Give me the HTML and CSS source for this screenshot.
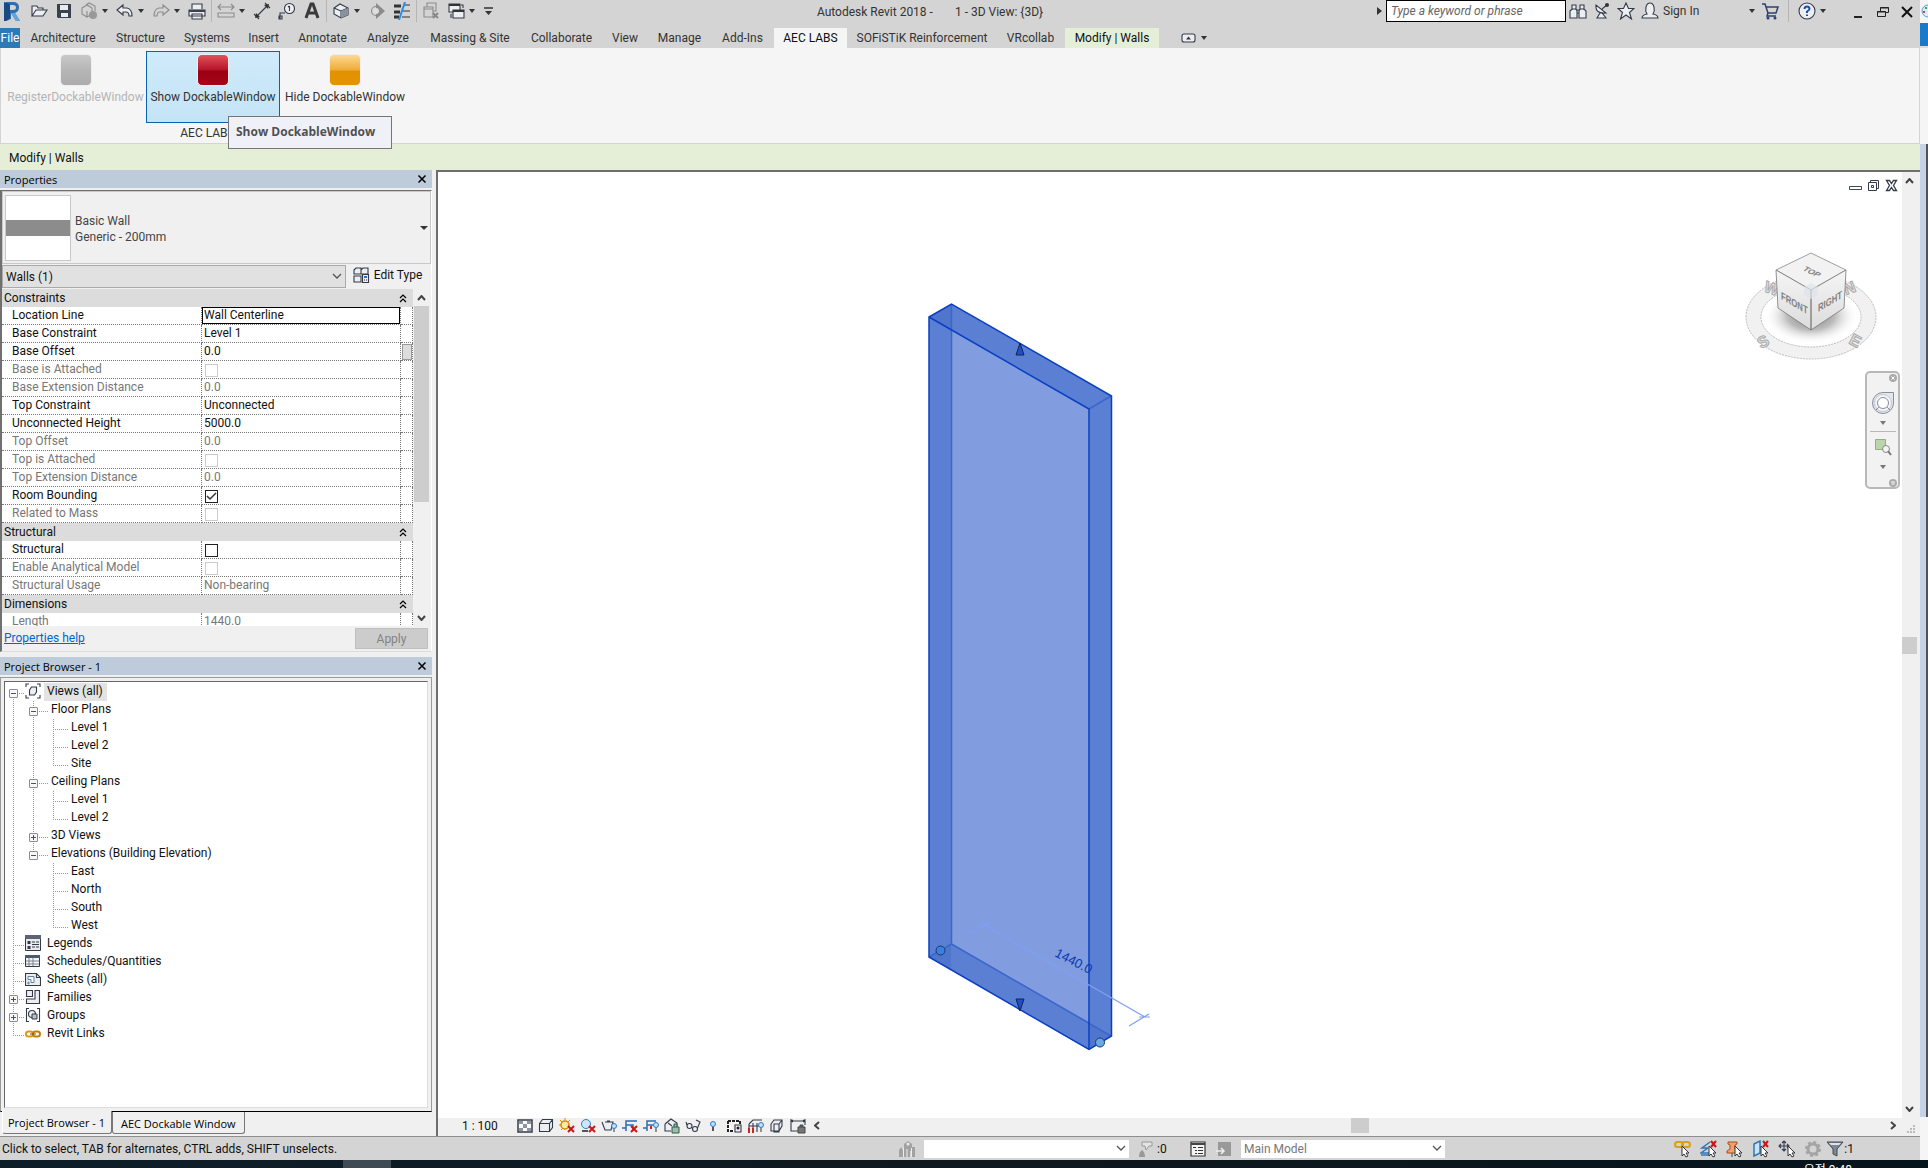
FILE: index.html
```html
<!DOCTYPE html>
<html lang="en">
<head>
<meta charset="utf-8">
<title>Autodesk Revit 2018</title>
<link rel="stylesheet" href="styles.css">
</head>
<body>
<div class="desktop">
<div class="app">

<header class="titlebar">
  <div class="quick">
    <button class="logo" aria-label="Application menu"><svg width="21" height="22" viewBox="0 0 21 22"><path d="M4 2h7q6 0 6 5.500 0 4-4 5.500l5 8h-4l-5-8v6l-5 2z" fill="#2f6fb0"/><path d="M8 5h3q3 0 3 2.500T11 10H8z" fill="#d4d4d4"/><path d="M2 2l6 2v14l-4 3H2z" fill="#1b4a80"/><path d="M9 13l4 0 5 8h-4z" fill="#5ea6dc"/></svg></button>
    <button aria-label="Open"><svg viewBox="0 0 18 18"><path d="M2 14V4h5l1 2h5v2M2 14l4-6h11l-4 6z" class="ln lt"/></svg></button>
    <button aria-label="Save"><svg viewBox="0 0 18 18"><path d="M2 2h14v14H3l-1-1z" fill="#3a404e"/><path d="M5 3h8v5H5zM6 11h7v4H6z" fill="#e8ebf0"/></svg></button>
    <button class="dd off" aria-label="Synchronize"><svg viewBox="0 0 18 18"><path d="M2 6l5-3 5 3v6l-5 3-5-3zM6 3l3-2 6 3v5M7 9v6" class="ln"/><circle cx="13" cy="13" r="4" fill="#999"/></svg><i class="caret"></i></button>
    <button class="dd" aria-label="Undo"><svg viewBox="0 0 18 18"><path d="M1 8l6-5v3h4q5 1 5 8h-3q0-4-3-4H7v3z" class="ln lt"/></svg><i class="caret"></i></button>
    <button class="dd off" aria-label="Redo"><svg viewBox="0 0 18 18"><path d="M17 8l-6-5v3H7q-5 1-5 8h3q0-4 3-4h3v3z" class="ln"/></svg><i class="caret"></i></button>
    <button aria-label="Print"><svg viewBox="0 0 18 18"><path d="M4 7V2h10v5M1 8h16v6H1zM4 12h10v5H4z" class="ln lt"/><path d="M1 8h16v2H1z" fill="#3a404e"/></svg></button>
    <i class="sep"></i>
    <button class="dd off" aria-label="Measure"><svg viewBox="0 0 18 18"><path d="M1 5h16M4 2L1 5l3 3M14 2l3 3-3 3M1 11v4h16v-4z" class="ln"/></svg><i class="caret"></i></button>
    <button aria-label="Aligned dimension"><svg viewBox="0 0 18 18"><path d="M3 15L15 3M1 12l5 5M12 1l5 5" class="ln"/><path d="M2 16l1-5 4 4zM16 2l-5 1 4 4z" fill="#333"/></svg></button>
    <button aria-label="Tag by category"><svg viewBox="0 0 18 18"><circle cx="11.500" cy="6.500" r="5" class="ln lt"/><path d="M11.500 4v5M10 5l1.500-1M2 17v-6h5M1 14h3v3H1z" class="ln"/></svg></button>
    <button aria-label="Text"><svg viewBox="0 0 18 18"><path d="M3 16L8 2h2l5 14M5 11h8" fill="none" stroke="#3a3a3a" stroke-width="3"/></svg></button>
    <i class="sep"></i>
    <button class="dd" aria-label="Default 3D view"><svg viewBox="0 0 18 18"><path d="M2 6l6-4 8 4v7l-7 3-7-4z" class="ln lt"/><path d="M2 6l7 3v7M9 9l7-3" class="ln"/><path d="M9 9l7-3v7l-7 3z" fill="#8a909c"/></svg><i class="caret"></i></button>
    <button class="off" aria-label="Section"><svg viewBox="0 0 18 18"><circle cx="8" cy="9" r="4.500" class="ln"/><path d="M8 1l9 8-9 8z" fill="#8b8b8b"/><circle cx="8" cy="9" r="3" fill="#ddd"/></svg></button>
    <button aria-label="Thin lines"><svg viewBox="0 0 18 18"><path d="M1 4h7M1 10h6M1 15h5" stroke="#333" stroke-width="3"/><path d="M11 3h6M10 9h7M9 15h8" stroke="#333"/><path d="M12 0L6 18" stroke="#2c8de0" stroke-width="2"/></svg></button>
    <i class="sep"></i>
    <button class="off" aria-label="Close hidden windows"><svg viewBox="0 0 18 18"><path d="M5 5V1h9v8h-3M2 5h9v10H2zM2 7h9" class="ln"/><path d="M11 11l5 5M16 11l-5 5" stroke="#888" stroke-width="2"/></svg></button>
    <button class="dd" aria-label="Switch windows"><svg viewBox="0 0 18 18"><path d="M2 2h11v8H2z" class="ln lt"/><path d="M6 8h11v8H6z" class="ln lt"/><path d="M6 9h11M2 3h11" stroke="#333" stroke-width="2"/><path d="M14 3h2v3M4 12v4" class="ln"/></svg><i class="caret"></i></button>
    <button class="more" aria-label="Customize toolbar"><svg viewBox="0 0 12 18"><path d="M1 6h9" stroke="#333" stroke-width="1.500"/><path d="M2 9h7l-3.500 4z" fill="#333"/></svg></button>
  </div>
  <h1 class="title"><span>Autodesk Revit 2018 -</span><span>1 - 3D View: {3D}</span></h1>
  <div class="account">
    <i class="caret side"></i>
    <input class="search" type="text" placeholder="Type a keyword or phrase" aria-label="Search help">
    <button aria-label="Search"><svg viewBox="0 0 18 18"><path d="M3 8V3h4v5M11 8V3h4v5M1 9l2-2h4l1 2v7H1zM10 9l1-2h4l2 2v7h-7zM8 8h2v3H8z" class="ln lt"/></svg></button>
    <button aria-label="Communication center"><svg viewBox="0 0 18 18"><path d="M3 3q-1 9 10 8zM9 7l5-4M7 11l-3 5h9l-4-5" class="ln lt"/><circle cx="14" cy="3" r="2" fill="#333"/></svg></button>
    <button aria-label="Favorites"><svg viewBox="0 0 18 18"><path d="M9 1l2.500 5.500H17l-4.500 4 2 6.500L9 13l-5.500 4 2-6.500-4.500-4h5.500z" class="ln lt"/></svg></button>
    <button class="signin"><svg viewBox="0 0 18 18"><path d="M1 16q0-3 5-4Q4 9 5 5q1-4 4-4t4 4q1 4-1 7 5 1 5 4z" class="ln lt"/></svg><span>Sign In</span><i class="caret"></i></button>
    <button aria-label="App store"><svg viewBox="0 0 18 18"><path d="M1 2h3l3 9h8l2-6H5M7 11l-1 3h9" fill="none" stroke="#2f3f70" stroke-width="1.500"/><circle cx="7" cy="16" r="1.500" fill="#2f3f70"/><circle cx="14" cy="16" r="1.500" fill="#2f3f70"/></svg></button>
    <i class="sep"></i>
    <button class="dd" aria-label="Help"><svg viewBox="0 0 18 18"><circle cx="9" cy="9" r="8" class="ln lt"/><path d="M6.500 7q0-2.500 2.500-2.500T11.500 7Q11.500 8 9 9.500V11M9 12.500V14" fill="none" stroke="#1c50b0" stroke-width="2"/></svg><i class="caret"></i></button>
  </div>
  <div class="winbtns">
    <button aria-label="Minimize"><svg viewBox="0 0 14 14"><path d="M2 12h8" stroke="#222" stroke-width="2"/></svg></button>
    <button aria-label="Restore"><svg viewBox="0 0 14 14"><path d="M1.500 6.500h8v5h-8zM4.500 6V2.500h8v5H10M1 7h9M4 3h9" fill="none" stroke="#222"/></svg></button>
    <button aria-label="Close"><svg viewBox="0 0 14 14"><path d="M2 2l10 10M12 2L2 12" stroke="#111" stroke-width="2"/></svg></button>
  </div>
</header>

<nav class="tabs">
  <button class="file">File</button><button>Architecture</button><button>Structure</button><button>Systems</button><button>Insert</button><button>Annotate</button><button>Analyze</button><button>Massing &amp; Site</button><button>Collaborate</button><button>View</button><button>Manage</button><button>Add-Ins</button><button class="current">AEC LABS</button><button>SOFiSTiK Reinforcement</button><button>VRcollab</button><button class="context">Modify | Walls</button><button class="fold" aria-label="Minimize ribbon"><svg width="15" height="10" viewBox="0 0 15 10"><rect x="1" y="1" width="13" height="8" rx="2" class="ln lt"/><path d="M5 6.500h5L7.500 3.500z" fill="#333"/></svg><i class="caret"></i></button>
</nav>

<section class="ribbon">
  <div class="group">
    <div class="cmds">
      <button class="cmd" disabled><span class="gem grey"></span>RegisterDockableWindow</button>
      <button class="cmd hot"><span class="gem red"></span>Show DockableWindow</button>
      <button class="cmd"><span class="gem gold"></span>Hide DockableWindow</button>
    </div>
    <div class="caption">AEC LABS</div>
    <div class="tooltip" role="tooltip">Show DockableWindow</div>
  </div>
</section>
<div class="options">Modify | Walls</div>

<main class="work">
<aside class="dock">
  <section class="panel props">
    <header class="phead"><h2>Properties</h2><button aria-label="Close properties"><svg viewBox="0 0 10 10"><path d="M1.500 1.500l7 7M8.500 1.500l-7 7"/></svg></button></header>
    <div class="pframe">
      <button class="type"><span class="thumb"></span><span class="tname">Basic Wall<br>Generic - 200mm</span><i class="caret big"></i></button>
      <div class="filter">
        <select aria-label="Element filter"><option>Walls (1)</option></select>
        <button class="edit"><svg width="17" height="17" viewBox="0 0 17 17"><path d="M1 3l2-2h5v6H1zM8 3l2-2h5v6M1 9h7v6H1zM8 3v4h7" class="ln lt"/><path d="M9.500 7.500h6v8h-6z" class="ln lt"/><path d="M11 9h3v2h-3z" fill="#2d6fc4"/><path d="M11 13h3" stroke="#333" stroke-dasharray="1 1"/></svg>Edit Type</button>
      </div>
      <div class="gridwrap">
        <table class="grid">
          <colgroup><col class="c1"><col><col class="c3"></colgroup>
          <tbody>
          <tr class="gh"><th colspan="3"><div>Constraints<svg viewBox="0 0 8 9"><path d="M1 4l3-3 3 3M1 8l3-3 3 3"/></svg></div></th></tr>
          <tr><th><label for="p1">Location Line</label></th><td><input class="focus" id="p1" value="Wall Centerline"></td><td></td></tr>
          <tr><th><label for="p2">Base Constraint</label></th><td><input id="p2" value="Level 1"></td><td></td></tr>
          <tr><th><label for="p3">Base Offset</label></th><td><input id="p3" value="0.0"></td><td><button class="assoc" aria-label="Associate parameter"></button></td></tr>
          <tr><th><label for="p4">Base is Attached</label></th><td><input type="checkbox" id="p4" disabled></td><td></td></tr>
          <tr><th><label for="p5">Base Extension Distance</label></th><td><input id="p5" value="0.0" disabled></td><td></td></tr>
          <tr><th><label for="p6">Top Constraint</label></th><td><input id="p6" value="Unconnected"></td><td></td></tr>
          <tr><th><label for="p7">Unconnected Height</label></th><td><input id="p7" value="5000.0"></td><td></td></tr>
          <tr><th><label for="p8">Top Offset</label></th><td><input id="p8" value="0.0" disabled></td><td></td></tr>
          <tr><th><label for="p9">Top is Attached</label></th><td><input type="checkbox" id="p9" disabled></td><td></td></tr>
          <tr><th><label for="p10">Top Extension Distance</label></th><td><input id="p10" value="0.0" disabled></td><td></td></tr>
          <tr><th><label for="p11">Room Bounding</label></th><td><input type="checkbox" id="p11" checked></td><td></td></tr>
          <tr><th><label for="p12">Related to Mass</label></th><td><input type="checkbox" id="p12" disabled></td><td></td></tr>
          <tr class="gh"><th colspan="3"><div>Structural<svg viewBox="0 0 8 9"><path d="M1 4l3-3 3 3M1 8l3-3 3 3"/></svg></div></th></tr>
          <tr><th><label for="p13">Structural</label></th><td><input type="checkbox" id="p13"></td><td></td></tr>
          <tr><th><label for="p14">Enable Analytical Model</label></th><td><input type="checkbox" id="p14" disabled></td><td></td></tr>
          <tr><th><label for="p15">Structural Usage</label></th><td><input id="p15" value="Non-bearing" disabled></td><td></td></tr>
          <tr class="gh"><th colspan="3"><div>Dimensions<svg viewBox="0 0 8 9"><path d="M1 4l3-3 3 3M1 8l3-3 3 3"/></svg></div></th></tr>
          <tr><th><label for="p16">Length</label></th><td><input id="p16" value="1440.0" disabled></td><td></td></tr>
          </tbody>
        </table>
        <div class="vbar"><svg viewBox="0 0 9 6"><path d="M1 5l3.500-4L8 5"/></svg><span class="vthumb"></span><svg viewBox="0 0 9 6"><path d="M1 1l3.500 4L8 1"/></svg></div>
      </div>
      <footer class="pfoot"><a href="#help">Properties help</a><button disabled>Apply</button></footer>
    </div>
  </section>

  <section class="panel browser">
    <header class="phead"><h2>Project Browser - 1</h2><button aria-label="Close project browser"><svg viewBox="0 0 10 10"><path d="M1.500 1.500l7 7M8.500 1.500l-7 7"/></svg></button></header>
    <div class="bframe">
      <ul class="tree">
        <li><i class="g d h"><button class="ex" aria-label="Collapse Views"></button></i><svg viewBox="0 0 16 16"><path d="M1 4V1h3M12 1h3v3M1 12v3h3M12 15h3v-3" class="ln"/><path d="M4.500 7l2-3h5v5l-2 3h-5z" class="ln lt"/></svg><span class="sel">Views (all)</span></li>
        <li><i class="g v"></i><i class="g v h e"><button class="ex" aria-label="Collapse Floor Plans"></button></i><span>Floor Plans</span></li>
        <li><i class="g v"></i><i class="g v"></i><i class="g v h e"></i><span>Level 1</span></li>
        <li><i class="g v"></i><i class="g v"></i><i class="g v h e"></i><span>Level 2</span></li>
        <li><i class="g v"></i><i class="g v"></i><i class="g u h e"></i><span>Site</span></li>
        <li><i class="g v"></i><i class="g v h e"><button class="ex" aria-label="Collapse Ceiling Plans"></button></i><span>Ceiling Plans</span></li>
        <li><i class="g v"></i><i class="g v"></i><i class="g v h e"></i><span>Level 1</span></li>
        <li><i class="g v"></i><i class="g v"></i><i class="g u h e"></i><span>Level 2</span></li>
        <li><i class="g v"></i><i class="g v h e"><button class="ex plus" aria-label="Expand 3D Views"></button></i><span>3D Views</span></li>
        <li><i class="g v"></i><i class="g u h e"><button class="ex" aria-label="Collapse Elevations"></button></i><span>Elevations (Building Elevation)</span></li>
        <li><i class="g v"></i><i class="g"></i><i class="g v h e"></i><span>East</span></li>
        <li><i class="g v"></i><i class="g"></i><i class="g v h e"></i><span>North</span></li>
        <li><i class="g v"></i><i class="g"></i><i class="g v h e"></i><span>South</span></li>
        <li><i class="g v"></i><i class="g"></i><i class="g u h e"></i><span>West</span></li>
        <li><i class="g v h"></i><svg viewBox="0 0 16 16"><path d="M.5.500h15v15H.5z" fill="#e8eaee" stroke="#333a48"/><path d="M0 0h16v4H0z" fill="#5c6474"/><path d="M2.500 6h3v3h-3zM2.500 11h3v3h-3z" fill="#333a48"/><path d="M7 7h3M11 7h3M7 9.500h7M7 12h3M11 12h3" stroke="#333a48"/></svg><span>Legends</span></li>
        <li><i class="g v h"></i><svg viewBox="0 0 16 16"><path d="M.5 2.500h14v11H.5z" fill="#f4f5f7" stroke="#333a48"/><path d="M0 2h15v3H0z" fill="#4c5a70"/><path d="M1 8h13M1 11h13M4 5v8M8 5v8" stroke="#7c8390"/></svg><span>Schedules/Quantities</span></li>
        <li><i class="g v h"></i><svg viewBox="0 0 16 16"><path d="M.5 2.500h11l4 4v8H.5zM11.500 3v3.500h4" class="ln lt"/><path d="M3 5.500h6v6H6v-3H3zM3 11h1v2H3z" fill="#fff" stroke="#5c84a8"/></svg><span>Sheets (all)</span></li>
        <li><i class="g v h"><button class="ex plus" aria-label="Expand Families"></button></i><svg viewBox="0 0 16 16"><path d="M1.500 1.500h6v6h-6zM10 1.500h4.500v13h-13V10H10z" class="ln lt"/></svg><span>Families</span></li>
        <li><i class="g v h"><button class="ex plus" aria-label="Expand Groups"></button></i><svg viewBox="0 0 16 16"><path d="M4 1.500H1.500v13H4M12 1.500h2.500v13H12" class="ln"/><circle cx="7" cy="7" r="3.500" class="ln lt"/><path d="M7 7h5v5H7z" fill="#b8bec8" stroke="#333a48"/></svg><span>Groups</span></li>
        <li><i class="g u h"></i><svg viewBox="0 0 16 16"><rect x="1" y="6.500" width="7" height="5" rx="2.500" fill="none" stroke="#d99a12" stroke-width="2"/><rect x="8" y="6.500" width="7" height="5" rx="2.500" fill="none" stroke="#c08008" stroke-width="2"/><path d="M5 9h6" stroke="#7a5205" stroke-width="1"/></svg><span>Revit Links</span></li>
      </ul>
    </div>
    <div class="dtabs"><button class="on">Project Browser - 1</button><button>AEC Dockable Window</button></div>
  </section>
</aside>

<section class="view">
  <div class="stage">
    <svg class="model" viewBox="0 0 1464 946" role="img" aria-label="Selected wall, 1440.0 long">
      <path d="M491 145l22-13 160 92v640l-22 14-160-93z" fill="#5b80d3"/>
      <path d="M513.500 158L651 237v613l-137.500-78z" fill="#819ddf"/>
      <path d="M491 145l22-13v26zM491 785l22-13v26zM651 878l22-14-22-13z" fill="#4f75cd"/>
      <path d="M513.500 132v640L491 785M513.500 772L673 864M651 237l22-13" fill="none" stroke="#3c66cb" stroke-width="1.500"/>
      <path d="M491 145l22.500-13L673.500 224v640L651 877.500 491 785zM491 145l160 92v640" fill="none" stroke="#0a3fc4" stroke-width="1.500"/>
      <path d="M546 753L707 845M532 761l20-11M541 753h10M691 854l20-12M701 845h11" fill="none" stroke="#7f9ff5" stroke-width="1.200"/>
      <path d="M578 183h8l-4-12zM578 827h8l-4 12z" fill="#1f4fc8" stroke="#14244e"/>
      <circle cx="502.500" cy="778.500" r="4.500" fill="#3b80e0" stroke="#173a6b"/>
      <circle cx="662" cy="870.500" r="4.500" fill="#6fa8e6" stroke="#173a6b"/>
      <text x="616" y="784" transform="rotate(27 616 784)" class="dim">1440.0</text>
    </svg>
    <div class="mdi">
      <button aria-label="Minimize view"><svg viewBox="0 0 13 13"><path d="M.5 7.500h12v3H.5z" fill="#fff" stroke="#444a58"/></svg></button>
      <button aria-label="Restore view"><svg viewBox="0 0 13 13"><path d="M3.500 3V1.500h8v8H10M1.500 3.500h8v8h-8zM4.500 6.500h2v2h-2z" fill="none" stroke="#333a48"/></svg></button>
      <button aria-label="Close view"><svg viewBox="0 0 13 13"><path d="M1.500 1.500h3l2 3 2-3h3l-3 5 3 5h-3l-2-3-2 3h-3l3-5z" fill="#fff" stroke="#333a48" stroke-width="1.300"/></svg></button>
    </div>
    <svg class="cube" width="140" height="120" viewBox="0 0 140 120" role="img" aria-label="View cube">
      <defs>
        <radialGradient id="sh"><stop offset="0" stop-color="#777"/><stop offset=".5" stop-color="#aaa" stop-opacity=".8"/><stop offset="1" stop-color="#fff" stop-opacity="0"/></radialGradient>
        <linearGradient id="fc" x2="0" y2="1"><stop offset="0" stop-color="#f5f5f5"/><stop offset="1" stop-color="#dcdcdc"/></linearGradient>
      </defs>
      <path fill-rule="evenodd" d="M6 72a65 42 0 0 1 130 0a65 42 0 0 1-130 0zM21 72a50 30 0 0 0 100 0a50 30 0 0 0-100 0z" fill="#f1f1f1" stroke="#bbb" stroke-dasharray="2 1"/>
      <ellipse cx="71" cy="71" rx="47" ry="28" fill="url(#sh)"/>
      <text class="rose" transform="translate(23 46) rotate(20)">W</text>
      <text class="rose" transform="translate(21 104) rotate(-28)">S</text>
      <text class="rose" transform="translate(108 98) rotate(28)">E</text>
      <text class="rose" transform="translate(106 50) rotate(-20)">N</text>
      <path d="M36 25L71 8l35 17-35 20z" fill="#f2f2f2" stroke="#888" stroke-width=".8"/>
      <path d="M36 25l35 20v40L38 63zM106 25L71 45v40l33-22z" fill="url(#fc)" stroke="#777" stroke-width=".8"/>
      <path d="M64 42l7-4 7 4v8l-7 4-7-4z" fill="#dfe3ec" opacity=".7"/>
      <text class="face" transform="matrix(.86 .5 0 1.200 41 54)">FRONT</text>
      <text class="face" transform="matrix(.86 -.5 0 1.200 78 67)">RIGHT</text>
      <text class="face" transform="matrix(.86 .4 -.7 .6 62 25)">TOP</text>
    </svg>
    <div class="navbar">
      <button class="dot" aria-label="Close navigation bar"><svg viewBox="0 0 10 10"><circle cx="5" cy="5" r="4" fill="#aaa"/><path d="M3.500 3.500l3 3M6.500 3.500l-3 3" stroke="#fff"/></svg></button>
      <button aria-label="Steering wheel"><svg width="24" height="24" viewBox="0 0 24 24"><path d="M12 1.500h10.500V12A10.500 10.500 0 1 1 12 1.500z" fill="#e4e7ef" stroke="#888e9a"/><circle cx="12" cy="12" r="8.500" fill="#f4f5f8" stroke="#c4c8d0"/><circle cx="12" cy="12" r="5.500" fill="#fff" stroke="#888e9a"/><path d="M8 16l-3 3M16 16l3 3" stroke="#888e9a"/></svg><i class="caret pale"></i></button>
      <hr>
      <button aria-label="Zoom region"><svg width="18" height="18" viewBox="0 0 18 18"><path d="M1.500 1.500h10v10h-10z" fill="#bcd4ac" stroke="#92b080"/><circle cx="12" cy="11" r="3.500" fill="#f4f4f4" stroke="#888"/><path d="M14 13l3 4" stroke="#777" stroke-width="2"/></svg><i class="caret pale"></i></button>
      <button class="dot" aria-label="Navigation options"><svg viewBox="0 0 10 10"><circle cx="5" cy="5" r="4" fill="#aaa"/><path d="M3 4h4M3.500 6h3" stroke="#fff"/></svg></button>
    </div>
  </div>
  <div class="vscroll"><svg viewBox="0 0 9 6"><path d="M1 5l3.500-4L8 5"/></svg><span></span><svg viewBox="0 0 9 6"><path d="M1 1l3.500 4L8 1"/></svg></div>
  <div class="viewbar">
    <span class="scale">1 : 100</span>
    <div class="vicons">
      <button aria-label="Detail level"><svg viewBox="0 0 16 16"><path d="M1 2h14v12H1z" fill="#fff" stroke="#333a48" stroke-width="1.500"/><path d="M2 3h4v3H2zM10 3h4v3h-4zM6 6h4v4H6zM2 10h4v3H2zM10 10h4v3h-4z" fill="#8d95a3"/></svg></button>
      <button aria-label="Visual style"><svg viewBox="0 0 16 16"><path d="M1.500 5.500l3-4h10v8l-3 4h-10zM1.500 5.500h10v8M11.500 5.500l3-4" class="ln lt"/></svg></button>
      <button aria-label="Sun path"><svg viewBox="0 0 16 16"><circle cx="6" cy="7" r="4" fill="#ffe9a0" stroke="#d08e00" stroke-width="1.500"/><path d="M6 0v2M0 7h2M1 2l2 2M11 2L9 4M2 12l2-2" stroke="#d08e00"/><path d="M9 8l6 6M15 8l-6 6" class="rx"/></svg></button>
      <button aria-label="Shadows"><svg viewBox="0 0 16 16"><circle cx="6" cy="6" r="4.500" fill="#cfe6fa" stroke="#3c7cb8"/><path d="M2 13h6" stroke="#555" stroke-width="2"/><path d="M9 8l6 6M15 8l-6 6" class="rx"/></svg></button>
      <button aria-label="Rendering"><svg viewBox="0 0 16 16"><path d="M1 4l3 8h6l2-8H4M6 3h3" class="ln lt"/><circle cx="13" cy="8" r="2.500" class="bulb"/><path d="M13 11v3" stroke="#333"/></svg></button>
      <button aria-label="Crop view"><svg viewBox="0 0 16 16"><path d="M0 10h4V3h11M4 13V7h7v6" fill="none" stroke="#2a6cb0" stroke-width="1.500"/><path d="M9 8l6 6M15 8l-6 6" class="rx"/></svg></button>
      <button aria-label="Show crop region"><svg viewBox="0 0 16 16"><path d="M0 10h4V3h9M4 13V7h6" fill="none" stroke="#2a6cb0" stroke-width="1.500"/><path d="M8 8v3" stroke="#c22" stroke-width="2"/><circle cx="13" cy="7" r="2.500" class="bulb"/><path d="M13 10v4" stroke="#333"/></svg></button>
      <button aria-label="Lock view"><svg viewBox="0 0 16 16"><path d="M1 6l6-5 6 4v3M1 6v7h6M4 5l4 3" class="ln lt"/><path d="M8 9h7v6H8zM10 9V6h3v3" fill="#9dbcae" stroke="#2c5a4a"/></svg></button>
      <button aria-label="Temporary hide"><svg viewBox="0 0 16 16"><circle cx="4.500" cy="8" r="2.500" class="ln lt"/><circle cx="10" cy="11" r="2.500" class="ln lt"/><path d="M2 7L1 4M12.500 10l2.500-6-4-2" class="ln"/></svg></button>
      <button aria-label="Reveal hidden"><svg viewBox="0 0 16 16"><circle cx="7" cy="6" r="2.500" class="bulb"/><path d="M7 9v4" stroke="#555" stroke-width="2"/></svg></button>
      <button aria-label="Temporary view properties"><svg viewBox="0 0 16 16"><path d="M1 3h12v3M1 3v10h6" fill="#fff" stroke="#222" stroke-width="2" stroke-dasharray="3 1"/><path d="M8 7h6v7H8z" class="ln lt"/><circle cx="11" cy="10" r="1.500" fill="#222"/></svg></button>
      <button aria-label="Analytical model"><svg viewBox="0 0 16 16"><path d="M1 6l4-4h9M1 6v8M5 5v9M9 5v9M1 8h10" class="ln"/><path d="M1 10v5M5 10v5" stroke="#c22" stroke-width="2"/><circle cx="13" cy="7" r="2.500" class="bulb"/><path d="M13 10v4" stroke="#333"/></svg></button>
      <button aria-label="Displacement sets"><svg viewBox="0 0 16 16"><path d="M2 6l3-4h8v6l-3 5H2zM5 6h5v8H5zM10 6l3-4" class="ln lt"/></svg></button>
      <button aria-label="Reveal constraints"><svg viewBox="0 0 16 16"><path d="M1 3h14M1 1v12h8M15 1v6M3 2L1 3l2 1M13 2l2 1-2 1" class="ln"/><path d="M8 9h7v6H8zM10 9V7h3v2" fill="#777" stroke="#444"/></svg></button>
    </div>
    <svg class="arr" viewBox="0 0 6 9"><path d="M5 1L1 4.500 5 8"/></svg>
    <div class="track"><span></span></div>
    <svg class="arr" viewBox="0 0 6 9"><path d="M1 1l4 3.500L1 8"/></svg>
  </div>
  <div class="grip"><svg width="9" height="9" viewBox="0 0 9 9"><path d="M6 0h2v2H6zM3 3h2v2H3zM6 3h2v2H6zM0 6h2v2H0zM3 6h2v2H3zM6 6h2v2H6z" fill="#bbb"/></svg></div>
</section>
</main>

<footer class="status">
  <p>Click to select, TAB for alternates, CTRL adds, SHIFT unselects.</p>
  <div class="mid">
    <button aria-label="Worksets"><svg viewBox="0 0 18 18"><path d="M6 17V4l4-3 4 3v3h3v10h-4v-6h-1v6zM1 10l2-3 2 3v7H1z" fill="#a2a2a2"/><circle cx="10" cy="4" r="1.500" fill="#eee"/><path d="M5.500 8v9M9 9v8M13.500 8v9" stroke="#eee"/></svg></button>
    <select class="ws" aria-label="Active workset" disabled><option></option></select>
    <button class="req"><svg viewBox="0 0 18 18"><path d="M5 2h10v4h-3l-3 4-1-4H5z" fill="#e4e4e4" stroke="#999"/><path d="M2 17q0-5 3-7 3 2 3 7z" fill="#999"/></svg><span>:0</span></button>
    <button aria-label="Design options"><svg viewBox="0 0 18 18"><path d="M2 2h14v14H2z" fill="#f4f4f4" stroke="#333" stroke-width="1.200"/><path d="M2 4h14" stroke="#444" stroke-width="2"/><path d="M4 7.500h3M9 7.500h5M6 10.500h2M9 10.500h5M6 13.500h2M9 13.500h5" stroke="#333"/></svg></button>
    <button aria-label="Add to set"><svg viewBox="0 0 18 18"><path d="M3 2h13v14H3z" fill="#999"/><path d="M1 11h8M6 8l3 3-3 3" fill="none" stroke="#eee" stroke-width="1.500"/></svg></button>
    <select class="dopt" aria-label="Design option" disabled><option>Main Model</option></select>
  </div>
  <div class="picks">
    <button aria-label="Select links"><svg viewBox="0 0 18 18"><rect x="1" y="2" width="8" height="5" rx="2.500" class="chain"/><rect x="8" y="2" width="8" height="5" rx="2.500" class="chain"/><path d="M8 6v10l2-2 2 3 2-1-2-3h3z" class="ptr"/></svg></button>
    <button aria-label="Select underlay"><svg viewBox="0 0 18 18"><path d="M10 2L2 8h6M8 8L1 13h8M1 15h9" fill="none" stroke="#2f76b8" stroke-width="1.500"/><path d="M11 1l5 6M16 1l-5 6" class="rx"/><path d="M9 6v10l2-2 2 3 2-1-2-3h3z" class="ptr"/></svg></button>
    <button aria-label="Select pinned"><svg viewBox="0 0 18 18"><path d="M2 2h9v2l-2 1v4l3 2v2H1v-2l3-2V5L2 4z" fill="#f0a070" stroke="#b04a10"/><path d="M6 13v4" stroke="#444"/><path d="M9 6v10l2-2 2 3 2-1-2-3h3z" class="ptr"/></svg></button>
    <button aria-label="Select by face"><svg viewBox="0 0 18 18"><path d="M2 4l6-3v12l-6 3z" fill="#c8e4f8" stroke="#2f76b8" stroke-width="1.500"/><path d="M11 1l5 6M16 1l-5 6" class="rx"/><path d="M9 6v10l2-2 2 3 2-1-2-3h3z" class="ptr"/></svg></button>
    <button aria-label="Drag on selection"><svg viewBox="0 0 18 18"><path d="M6 1v10M1 6h10M4 3l2-2 2 2M4 9l2 2 2-2M3 4L1 6l2 2M9 4l2 2-2 2" class="ln"/><path d="M10 6v10l2-2 2 3 2-1-2-3h3z" class="ptr"/></svg></button>
    <button aria-label="Background processes"><svg viewBox="0 0 18 18"><circle cx="9" cy="9" r="5" fill="none" stroke="#a4a4a4" stroke-width="3"/><circle cx="9" cy="9" r="7" fill="none" stroke="#a4a4a4" stroke-width="2" stroke-dasharray="3 2.500"/></svg></button>
    <button class="count"><svg viewBox="0 0 18 18"><path d="M1 2h16l-6 7v7l-4-2V9z" fill="#7f8694" stroke="#444a58"/><path d="M3 3h12l-2 2H5z" fill="#dfe3ea"/></svg><span>:1</span></button>
  </div>
</footer>
</div>

<aside class="behind">
  <div class="b1"><svg width="8" height="14" viewBox="0 0 8 14"><circle cx="8" cy="7" r="6" fill="#d8eef8" stroke="#5aa0c8"/><path d="M3 7h2v2H3z" fill="#d43"/><path d="M5 3h2v2H5z" fill="#3a4"/></svg></div>
  <div class="b2"></div><div class="b3"></div><div class="b4"></div><div class="b5"></div>
</aside>
<div class="taskbar"><span class="task"></span><span class="clock">오전 9:48</span></div>
</div>
</body>
</html>
```
FILE: styles.css
```css
* { box-sizing: border-box; }
body { margin: 0; background: #d4d4d4; font: 12px/18px Roboto, "Noto Sans CJK KR", sans-serif; color: #111; }
button, input, select { font: inherit; color: inherit; }
button { display: flex; align-items: center; justify-content: center; border: 0; padding: 0; background: none; }
h1, h2, p, ul { margin: 0; padding: 0; font: inherit; }
svg { display: block; flex: none; }
.ln { fill: none; stroke: #333a48; stroke-width: 1.1; }
.lt { fill: #eceef2; }
.off .ln { stroke: #8b8b8b; }
.rx { fill: none; stroke: #cc1616; stroke-width: 2; }
.bulb { fill: #bfe0ff; stroke: #2a78c8; }
.ptr { fill: #fff; stroke: #333; }
.chain { fill: none; stroke: #d9a012; stroke-width: 2; }

.desktop { display: grid; grid-template: minmax(0, 1fr) 8px / minmax(0, 1fr) 8px; height: 100vh; overflow: hidden; }
.app { display: flex; flex-direction: column; min-width: 0; background: #f0f0f0; }

.caret { flex: none; width: 0; border: 3px solid transparent; border-top: 4px solid #333; border-bottom: 0; }
.caret.side { border: 4px solid transparent; border-left: 5px solid #333; border-right: 0; }
.caret.big { border-width: 4px 4px 0; }
.caret.pale { border-top-color: #777; }
.sep { width: 1px; height: 22px; margin: 0 -2px; background: #b6b6b6; }

.titlebar { display: flex; height: 28px; background: #d4d4d4; }
.quick { display: flex; align-items: center; gap: 7px; height: 22px; padding-left: 2px; }
.quick svg, .account svg { width: 18px; height: 18px; }
.quick .logo svg { width: 21px; height: 22px; }
.quick .more svg { width: 12px; }
.dd { width: 29px; justify-content: space-between; }
.dd .caret { margin-right: 1px; }
.title { display: flex; flex: 1; justify-content: center; gap: 22px; padding-right: 12px; color: #333; line-height: 24px; }
.account { display: flex; align-items: center; gap: 6px; height: 22px; }
.search { width: 180px; height: 22px; margin-right: -3px; border: 1px solid #000; border-radius: 0; background: #fff; padding: 0 4px; }
.search::placeholder { color: #666; font-style: italic; opacity: 1; }
.signin { width: 114px; color: #333; }
.signin span { flex: 1; padding-left: 4px; text-align: left; }
.account .sep { margin: 0 3px; }
.winbtns { display: flex; gap: 10px; align-items: center; height: 24px; padding: 0 6px 0 25px; }
.winbtns svg { width: 14px; height: 14px; }
.account .caret.side { margin-right: -2px; }

.tabs { display: grid; grid-template-columns: 20px 86px 69px 64px 49px 69px 62px 102px 81px 46px 63px 63px 73px 150px 67px 95px 58px; height: 20px; background: #d4d4d4; color: #333; }
.tabs .file { background: #2b7ab5; color: #fff; }
.tabs .current { background: #f5f5f5; color: #111; }
.tabs .context { margin-left: 1px; background: #e5efd8; color: #111; }
.fold { gap: 5px; padding-left: 12px; }

.ribbon { height: 96px; padding: 3px 0 0 4px; background: #f5f5f5; border: 1px solid #d4d4d4; border-top: 0; }
.group { position: relative; width: max-content; }
.cmds { display: grid; grid-template-columns: 141px 134px 130px; }
.cmd { flex-direction: column; justify-content: flex-start; height: 72px; padding-top: 2px; gap: 1px; color: #333; white-space: nowrap; border: 1px solid transparent; }
.cmd:disabled { color: #b4b4b4; }
.cmd.hot { border-color: #0a62b5; background: linear-gradient(#cfeafb, #c4e4f5); }
.gem { width: 32px; height: 32px; margin-bottom: 1px; border: 1px solid #eee; border-radius: 5px; }
.grey { background: linear-gradient(#c8c8c8, #b6b6b6 50%, #acacac); }
.red { background: linear-gradient(#e0525a, #b8152a 48%, #9a0012 55%, #a80418); }
.gold { background: linear-gradient(#fdd992, #eeae3c 48%, #e29200 55%, #e59400); }
.caption { text-align: center; line-height: 20px; color: #333; }
.tooltip { position: absolute; left: 223px; top: 65px; width: 164px; height: 33px; padding-left: 7px; border: 1px solid #767676; background: #f0f1f8; color: #505050; font: bold 12px/29px "Open Sans", sans-serif; white-space: nowrap; }
.options { height: 26px; padding-left: 9px; background: #e5efd8; line-height: 28px; }

.work { display: flex; flex: 1; min-height: 0; }
.dock { display: flex; flex-direction: column; flex: none; width: 436px; }
.panel { width: 432px; }
.phead { display: flex; justify-content: space-between; align-items: center; height: 18px; padding: 0 5px 0 4px; background: #bdcbda; }
.phead h2, .dtabs { font: 11px/18px "Open Sans", sans-serif; color: #000; }
.phead h2 { padding-top: 2px; }
.phead svg { width: 10px; height: 10px; stroke: #000; stroke-width: 1.5; }
.pframe { height: 462px; margin-top: 2px; border: solid; border-width: 1px 1px 1px 2px; border-color: #707070 #fff #dcdcdc #707070; }
.type { width: 100%; height: 73px; justify-content: flex-start; padding: 0 2px; border: 1px solid #c8c8c8; background: #f0f0f0; }
.thumb { width: 66px; height: 66px; border: 1px solid #c8c8c8; background: linear-gradient(#fff 24px, #8c8c8c 24px 40px, #fff 40px); }
.tname { flex: 1; padding: 3px 0 0 4px; color: #444; line-height: 16px; text-align: left; }
.filter { display: flex; height: 25px; padding-top: 1px; }
select { appearance: none; margin: 0; border-radius: 0; background: #e1e1e1 url("data:image/svg+xml,%3Csvg xmlns='http://www.w3.org/2000/svg' width='16' height='8'%3E%3Cpath d='M4 1l4 4 4-4' fill='none' stroke='%23555' stroke-width='1.300'/%3E%3C/svg%3E") no-repeat right center; }
.filter select { width: 344px; height: 23px; padding: 0 3px; border: 1px solid #aaa; }
.edit { flex: 1; gap: 4px; height: 20px; padding-right: 2px; }
.gridwrap { display: flex; height: 337px; overflow: hidden; background: #fff; }
.grid { width: 411px; flex: none; align-self: flex-start; table-layout: fixed; border-spacing: 0; }
.c1 { width: 200px; }
.c3 { width: 12px; }
.grid th, .grid td { height: 18px; padding: 0; border: dotted #777; border-width: 0 1px 1px 0; font-weight: 400; text-align: left; line-height: 16px; }
.grid label { display: block; height: 17px; padding-left: 10px; }
.grid tr:has(:disabled) label { color: #777; }
.grid td input { display: block; width: 100%; height: 17px; margin: 0; border: 0; border-radius: 0; padding: 0 0 1px 2px; background: #fff; }
.grid td input:disabled { color: #777; }
.grid td input.focus { border: 1px solid #000; padding: 0 0 1px 1px; }
.grid td input[type=checkbox] { appearance: none; width: 13px; height: 13px; margin: 2px 0 0 3px; padding: 0; border: 1px solid #222; }
.grid td input[type=checkbox]:disabled { border-color: #ccc; }
.grid td input[type=checkbox]:checked { background: url("data:image/svg+xml,%3Csvg xmlns='http://www.w3.org/2000/svg' width='11' height='11'%3E%3Cpath d='M1 5l3 3 6-6' fill='none' stroke='%23333' stroke-width='1.500'/%3E%3C/svg%3E"); }
.assoc { width: 10px; height: 16px; margin-left: 1px; border: 1px solid #999; background: #ddd; }
.grid .gh th { border: 0; background: #dcdcdc; }
.gh div { display: flex; justify-content: space-between; align-items: center; height: 18px; padding: 0 6px 0 2px; }
.gh svg { width: 8px; height: 9px; }
.gh path { fill: none; stroke: #000; stroke-width: 1.2; }
.vbar { display: flex; flex-direction: column; align-items: center; flex: 1; padding: 6px 1px 5px 0; background: #f0f0f0; }
.vbar svg, .vscroll svg { width: 9px; height: 6px; }
.vbar path, .vscroll path, .arr path { fill: none; stroke: #444; stroke-width: 2; }
.vthumb { width: 15px; height: 196px; margin: 5px 0 auto; background: #cdcdcd; }
.pfoot { display: flex; justify-content: space-between; padding: 2px 3px 0 2px; line-height: 20px; }
.pfoot a { color: #0066cc; }
.pfoot button { width: 73px; height: 21px; border: 1px solid #bfbfbf; background: #ccc; color: #838383; }

.browser { display: flex; flex-direction: column; flex: 1; margin-top: 5px; min-height: 0; }
.bframe { display: flex; flex: 1; min-height: 0; margin-top: 2px; padding: 3px; border: 1px solid #999; border-bottom-color: #000; }
.tree { flex: 1; overflow: hidden; border: 1px solid #ddd; border-top-color: #666; border-left-color: #666; background: #fff; list-style: none; padding-top: 1px; }
.tree li { display: flex; height: 18px; line-height: 17px; }
.tree svg { width: 16px; height: 16px; }
.tree li > svg + span { margin-left: 3px; }
.tree span { padding: 0 3px; }
.tree .sel { padding-right: 4px; background: #e3e3e3; }
.g { --v: repeating-linear-gradient(#999 0 1px, transparent 1px 2px); --h: repeating-linear-gradient(90deg, #999 0 1px, transparent 1px 2px); flex: none; width: 20px; background-repeat: no-repeat; }
.e { width: 23px; }
.v { background-image: var(--v); background-position: 8px 0; background-size: 1px 18px; }
.g.h { background-image: var(--v), var(--h); background-position: 8px 0, 8px 10px; background-size: 1px 18px, 16px 1px; }
.g.u { background-size: 1px 10px, 16px 1px; }
.g.d { background-position: 8px 10px, 8px 10px; }
.ex { width: 9px; height: 9px; margin: 6px 0 0 4px; border: 1px solid #8c8c8c; border-radius: 1px; background: linear-gradient(#3553a0, #3553a0) center / 5px 1px no-repeat, #f8f8f8; }
.ex.plus { background: linear-gradient(#3553a0, #3553a0) center / 5px 1px no-repeat, linear-gradient(#3553a0, #3553a0) center / 1px 5px no-repeat, #f8f8f8; }
.dtabs { display: flex; height: 24px; padding-left: 2px; }
.dtabs button { height: 22px; padding: 2px 8px 0; border: 1px solid #777; border-top: 0; border-radius: 0 0 3px 3px; }
.dtabs .on { padding: 2px 6px 0 5px; border-left-color: #fff; margin-top: -1px; height: 23px; background: #f0f0f0; }

.view { display: grid; flex: 1; min-width: 0; grid-template: minmax(0, 1fr) 18px / minmax(0, 1fr) 18px; border: solid #6e6e6e; border-width: 2px 0 0 2px; }
.stage { position: relative; overflow: hidden; background: #fff; }
.model { width: 100%; height: 100%; }
.dim { fill: #0a3ab5; font: 13px "Liberation Sans", sans-serif; }
.mdi { position: absolute; top: 7px; right: 4px; display: flex; gap: 5px; }
.mdi svg { width: 13px; height: 13px; }
.cube { position: absolute; top: 73px; right: 22px; }
.face { fill: #808080; font: bold 9px "Liberation Sans", sans-serif; }
.rose { fill: #e4e4e4; stroke: #aaa; font: bold 16px "Liberation Sans", sans-serif; }
.navbar { position: absolute; top: 199px; right: 2px; display: flex; flex-direction: column; align-items: center; width: 35px; height: 118px; border: 2px solid #b8b8b8; border-radius: 5px; background: #f2f2f2; }
.navbar button { flex-direction: column; gap: 6px; }
.navbar .dot { align-self: flex-end; margin: 0 0 8px 0; }
.navbar .dot svg { width: 10px; height: 10px; }
.navbar hr + button { gap: 9px; }
.navbar hr { width: 26px; margin: 6px 0; border: 0; border-top: 1px solid #b8b8b8; }
.navbar button + .dot { margin-top: 9px; }
.vscroll { display: flex; flex-direction: column; align-items: center; justify-content: space-between; padding: 6px 3px 6px 0; background: #f0f0f0; }
.vscroll span { width: 15px; height: 17px; background: #cdcdcd; }
.viewbar { display: flex; align-items: center; height: 18px; padding: 0 6px 3px 24px; }
.scale { width: 55px; }
.vicons { display: flex; gap: 5px; padding-right: 8px; }
.vicons svg { width: 16px; height: 16px; }
.arr { width: 6px; height: 9px; }
.track { flex: 1; height: 15px; padding-left: 37%; }
.track span { display: block; width: 18px; height: 15px; background: #cdcdcd; }
.grip { padding: 7px 0 0 5px; }

.status { display: grid; grid-template-columns: 898px 1fr auto; align-items: center; height: 24px; border-top: 1px solid #8e8e8e; background: #d4d4d4; }
.status p { padding-left: 2px; }
.status svg { width: 18px; height: 18px; }
.mid, .picks { display: flex; align-items: center; gap: 8px; }
.mid select { height: 18px; border: 0; background-color: #fff; color: #777; opacity: 1; }
.ws { width: 205px; }
.dopt { width: 204px; padding: 0 3px; }
.req { width: 44px; justify-content: flex-start; gap: 2px; }
.picks { padding-right: 66px; }
.count { margin-left: -4px; }

.behind { display: grid; grid-template-rows: 23px 23px 98px 1fr 43px; background: #c6d2e6; }
.b1, .b5 { background: #f5f5f5; }
.b1 { padding-top: 4px; }
.b2 { background: #1979ca; }
.b3 { border-top: 2px solid #ddd; background: #f5f5f5; }
.b4 { border-right: 2px solid #505356; }
.taskbar { display: flex; grid-column: 1 / 3; justify-content: space-between; overflow: hidden; padding: 0 76px 0 343px; background: linear-gradient(90deg, #0d1e28, #10181f 50%, #06141b); }
.task { width: 48px; background: #3f4a53; }
.clock { color: #fff; line-height: 20px; }
```
